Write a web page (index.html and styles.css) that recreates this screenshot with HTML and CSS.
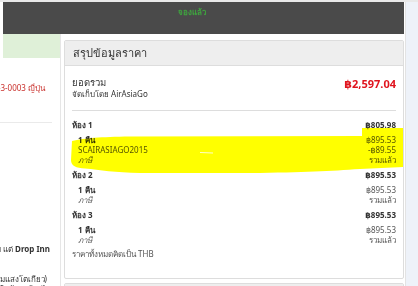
FILE: index.html
```html
<!DOCTYPE html>
<html>
<head>
<meta charset="utf-8">
<link rel="stylesheet" href="styles.css">
</head>
<body>

<div class="topline"></div>
<div class="page">
  <div class="main">
    <div class="status-bar">
      <span class="status-text">จองแล้ว</span>
    </div>

    <div class="content">
      <div class="side">
        <div class="side-alert"></div>
        <div class="side-line side-address"><span>บ้าน 7-1-3-0003 ญี่ปุ่น</span></div>
        <div class="side-rule"></div>
        <div class="side-line side-hotel"><span>โรงแรม แต่ <b>Drop Inn</b></span></div>
        <div class="side-line side-note"><span>(โรงแรมแสงโตเกียว)</span></div>
        <div class="side-line side-more"><span>ใกล้สถานีรถไฟ</span></div>
      </div>

      <div class="column">
        <div class="panel">
          <div class="panel-heading">สรุปข้อมูลราคา</div>
          <div class="panel-body">
            <div class="total-row">
              <div>
                <div class="total-label">ยอดรวม</div>
                <div class="total-sub">จัดเก็บโดย AirAsiaGo</div>
              </div>
              <div class="total-price">฿2,597.04</div>
            </div>
            <div class="divider"></div>

            <div class="room-head"><span>ห้อง 1</span><span>฿805.98</span></div>
            <div class="item"><span class="strong">1 คืน</span><span>฿895.53</span></div>
            <div class="item"><span>SCAIRASIAGO2015</span><span>-฿89.55</span></div>
            <div class="item"><span class="tax">ภาษี</span><span>รวมแล้ว</span></div>

            <div class="room-head"><span>ห้อง 2</span><span>฿895.53</span></div>
            <div class="item"><span class="strong">1 คืน</span><span>฿895.53</span></div>
            <div class="item"><span class="tax">ภาษี</span><span>รวมแล้ว</span></div>

            <div class="room-head"><span>ห้อง 3</span><span>฿895.53</span></div>
            <div class="item"><span class="strong">1 คืน</span><span>฿895.53</span></div>
            <div class="item"><span class="tax">ภาษี</span><span>รวมแล้ว</span></div>

            <div class="currency-note">ราคาทั้งหมดคิดเป็น THB</div>
          </div>
        </div>
        <div class="panel next-panel">
          <div class="panel-heading"></div>
        </div>
      </div>
    </div>
  </div>
  <div class="aside"></div>
</div>

<svg class="marker" width="418" height="286" viewBox="0 0 418 286">
  <path d="M72 141 C 85 138, 100 137, 130 136.5 L 362 136 L 362 128 L 403 128 L 403 167 L 360 169 C 330 171, 305 172.5, 250 173 L 140 173 C 115 172.5, 100 170, 85 168.5 C 76 168, 71 166, 71 160 Z" fill="#ffff00"/>
  <line x1="200" y1="152.5" x2="213" y2="153" stroke="#ffffff" stroke-width="1" opacity="0.8"/>
</svg>

</body>
</html>
```

FILE: styles.css
```css
body {
  margin: 0;
  background: #fff;
  font-family: Tahoma, "Noto Sans", "DejaVu Sans", sans-serif;
  font-size: 9px;
  color: #333;
  overflow: hidden;
}

.topline {
  height: 2px;
  background: #e9e9e9;
}

.page {
  display: flex;
  height: 284px;
  overflow: hidden;
}

.main {
  width: 404px;
}

.aside {
  flex: 1;
  margin-left: 1px;
  border-left: 1px solid #e3e3e3;
  background: #eef2f9;
}

.status-bar {
  margin-left: 3px;
  height: 32px;
  background: #4a4a4a;
  padding-left: 175px;
  box-sizing: border-box;
}

.status-text {
  display: inline-block;
  margin-top: 4px;
  color: #3fa33f;
  font-weight: bold;
  font-size: 8px;
}

.content {
  display: flex;
}

.side {
  width: 60px;
  height: 252px;
  border-right: 1px solid #e6e6e6;
  overflow: hidden;
  white-space: nowrap;
  font-size: 8px;
  line-height: 12px;
}

.side-alert {
  margin-left: 3px;
  height: 24px;
  background: #dff0d8;
}

.side-line {
  display: flex;
  justify-content: flex-end;
}

.side-address {
  color: #c9302c;
  margin-top: 24px;
  padding-right: 15px;
}

.side-rule {
  margin-top: 28px;
  width: 52px;
  border-top: 1px solid #eaeaea;
}

.side-hotel {
  margin-top: 120px;
  padding-right: 10px;
}

.side-note {
  margin-top: 18px;
  padding-right: 13px;
}

.side-more {
  margin-top: -2px;
  padding-right: 8px;
}

.column {
  margin-left: 3px;
  flex: 1;
}

.panel {
  margin-top: 6px;
  border: 1px solid #dddddd;
  border-radius: 2px;
}

.next-panel {
  margin-top: 4px;
}

.panel-heading {
  height: 24px;
  line-height: 24px;
  padding: 0 8px;
  background: #eeeeee;
  border-bottom: 1px solid #dddddd;
  font-size: 11px;
  color: #333;
}

.panel-body {
  padding: 11px 7px 15px 7px;
}

.total-row {
  display: flex;
  justify-content: space-between;
}

.total-label {
  font-size: 9.5px;
  line-height: 12px;
}

.total-sub {
  font-size: 8px;
  line-height: 10px;
}

.total-price {
  color: #e0141e;
  font-weight: bold;
  font-size: 11px;
  line-height: 14px;
}

.divider {
  margin-top: 11px;
  border-top: 1px solid #dddddd;
  margin-bottom: 4px;
}

.room-head {
  display: flex;
  justify-content: space-between;
  line-height: 20px;
  font-size: 8px;
  font-weight: bold;
}

.item {
  display: flex;
  justify-content: space-between;
  line-height: 10px;
  font-size: 8px;
  padding-left: 6px;
  color: #555;
}

.strong {
  font-weight: bold;
  color: #333;
}

.tax {
  font-style: italic;
}

.currency-note {
  line-height: 18px;
  font-size: 8px;
  color: #555;
}

.marker {
  position: absolute;
  left: 0;
  top: 0;
  pointer-events: none;
  mix-blend-mode: multiply;
}
```
